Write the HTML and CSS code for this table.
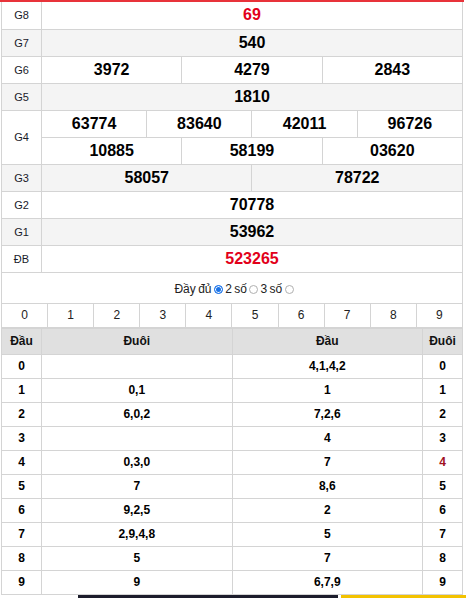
FILE: index.html
```html
<!DOCTYPE html>
<html>
<head>
<meta charset="utf-8">
<link rel="stylesheet" href="styles.css">
</head>
<body>
<div class="topbar"></div>
<div class="wrap">
  <table class="kq">
    <colgroup>
      <col class="c-lbl">
      <col><col><col><col><col><col><col><col><col><col><col><col>
    </colgroup>
    <tr><td class="lbl">G8</td><td colspan="12" class="num red">69</td></tr>
    <tr class="alt"><td class="lbl">G7</td><td colspan="12" class="num">540</td></tr>
    <tr><td class="lbl">G6</td><td colspan="4" class="num">3972</td><td colspan="4" class="num">4279</td><td colspan="4" class="num">2843</td></tr>
    <tr class="alt"><td class="lbl">G5</td><td colspan="12" class="num">1810</td></tr>
    <tr><td class="lbl" rowspan="2">G4</td><td colspan="3" class="num">63774</td><td colspan="3" class="num">83640</td><td colspan="3" class="num">42011</td><td colspan="3" class="num">96726</td></tr>
    <tr><td colspan="4" class="num">10885</td><td colspan="4" class="num">58199</td><td colspan="4" class="num">03620</td></tr>
    <tr class="alt"><td class="lbl">G3</td><td colspan="6" class="num">58057</td><td colspan="6" class="num">78722</td></tr>
    <tr><td class="lbl">G2</td><td colspan="12" class="num">70778</td></tr>
    <tr class="alt"><td class="lbl">G1</td><td colspan="12" class="num">53962</td></tr>
    <tr><td class="lbl">ĐB</td><td colspan="12" class="num red">523265</td></tr>
  </table>

  <div class="opts">
    Đầy đủ <span class="radio on"></span> 2 số <span class="radio"></span> 3 số <span class="radio"></span>
  </div>

  <table class="digits">
    <tr><td>0</td><td>1</td><td>2</td><td>3</td><td>4</td><td>5</td><td>6</td><td>7</td><td>8</td><td>9</td></tr>
  </table>

  <table class="loto">
    <colgroup><col class="c-dau"><col class="c-mid"><col class="c-mid"><col class="c-dau"></colgroup>
    <tr class="head"><th>Đầu</th><th>Đuôi</th><th>Đầu</th><th>Đuôi</th></tr>
    <tr><td>0</td><td></td><td>4,1,4,2</td><td>0</td></tr>
    <tr><td>1</td><td>0,1</td><td>1</td><td>1</td></tr>
    <tr><td>2</td><td>6,0,2</td><td>7,2,6</td><td>2</td></tr>
    <tr><td>3</td><td></td><td>4</td><td>3</td></tr>
    <tr><td>4</td><td>0,3,0</td><td>7</td><td class="dred">4</td></tr>
    <tr><td>5</td><td>7</td><td>8,6</td><td>5</td></tr>
    <tr><td>6</td><td>9,2,5</td><td>2</td><td>6</td></tr>
    <tr><td>7</td><td>2,9,4,8</td><td>5</td><td>7</td></tr>
    <tr><td>8</td><td>5</td><td>7</td><td>8</td></tr>
    <tr><td>9</td><td>9</td><td>6,7,9</td><td>9</td></tr>
  </table>

  <div class="banner">
    <div class="b-dark"></div>
    <div class="b-yellow"></div>
  </div>
</div>
</body>
</html>
```

FILE: styles.css
```css
* { box-sizing: border-box; }
html, body { margin: 0; padding: 0; background: #fff; }
body { font-family: "Liberation Sans", Arial, sans-serif; color: #000; width: 466px; overflow: hidden; }

.topbar { height: 2px; background: #e8333a; width: 464px; }

.wrap { width: 462px; margin-left: 1px; }

table { border-collapse: collapse; table-layout: fixed; width: 462px; }
td, th { border: 1px solid #d4d4d4; padding: 0; text-align: center; }

.kq .c-lbl { width: 40px; }
.kq tr { height: 27px; }
.kq .alt td { background: #f4f4f4; }
.kq .lbl { font-size: 11px; color: #1a1a2a; }
.kq .num { font-size: 16px; font-weight: bold; }
.kq .red { color: #e2001a; }
.kq tr:first-child td { border-top: 0; }

.opts {
  height: 30px;
  line-height: 30px;
  text-align: center;
  font-size: 12px;
  color: #222;
  padding-top: 1px;
  padding-left: 4px;
  border-left: 1px solid #d4d4d4;
  border-right: 1px solid #d4d4d4;
  word-spacing: -1px;
}
.radio {
  display: inline-block;
  vertical-align: -1px;
  width: 9px; height: 9px;
  border-radius: 50%;
  border: 1px solid #b0b0b0;
  background: #fff;
}
.radio.on { border: 1px solid #1a73e8; background: #1a73e8; box-shadow: inset 0 0 0 1px #fff; }

.digits tr { height: 24px; }
.digits td { font-size: 12px; color: #222; }

.loto .c-dau { width: 40px; }
.loto tr { height: 24px; }
.loto tr.head { height: 26px; }
.loto th { background: #e0e0e0; font-size: 12px; font-weight: bold; color: #111; }
.loto td { font-size: 12px; font-weight: bold; }
.loto .dred { color: #a01020; }

.banner { display: flex; height: 4px; margin-left: 77px; width: 389px; }
.b-dark { width: 260px; background: #1c1d2c; }
.b-yellow { width: 125px; margin-left: 3px; background: #f3c200; }
```
